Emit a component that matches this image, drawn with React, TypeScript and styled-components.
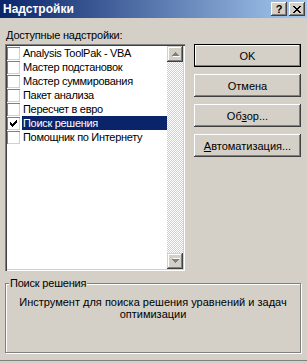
import React from 'react';
import styled, { createGlobalStyle } from 'styled-components';

const GlobalStyle = createGlobalStyle`
  html, body {
    margin: 0;
    padding: 0;
    background: #d4d0c8;
  }
  body {
    font-family: Tahoma, "Liberation Sans", Arial, sans-serif;
    font-size: 11px;
    color: #000;
  }
`;

const Window = styled.div`
  width: 307px;
  height: 363px;
  box-sizing: border-box;
  padding-bottom: 2px;
  background: #d4d0c8;
  display: flex;
  flex-direction: column;
  overflow: hidden;
`;

const TitleBar = styled.div`
  height: 18px;
  flex-shrink: 0;
  display: flex;
  align-items: center;
  padding: 0 2px 0 3px;
  background: linear-gradient(to right, #0a246a, #a6caf0);
`;

const Title = styled.span`
  flex: 1;
  color: #fff;
  font-weight: bold;
  font-size: 12px;
  line-height: 18px;
`;

const CaptionButtons = styled.div`
  display: flex;
  gap: 2px;
`;

const CaptionButton = styled.div`
  width: 16px;
  height: 14px;
  box-sizing: border-box;
  background: #d4d0c8;
  box-shadow: inset -1px -1px #404040, inset 1px 1px #fff, inset -2px -2px #808080, inset 2px 2px #d4d0c8;
  display: flex;
  align-items: center;
  justify-content: center;
  font-weight: bold;
  font-size: 11px;
  line-height: 14px;
`;

const Body = styled.div`
  flex: 1;
  padding: 11px 6px 0 5px;
  border-bottom: 1px solid #808080;
`;

const Main = styled.div`
  display: grid;
  grid-template-columns: 180px 107px;
  grid-template-rows: 13px 227px;
  column-gap: 9px;
  row-gap: 2px;
`;

const FieldLabel = styled.div`
  grid-column: 1;
  line-height: 13px;
  padding-left: 1px;
  letter-spacing: -0.2px;
`;

const ListBox = styled.div`
  grid-column: 1;
  grid-row: 2;
  box-sizing: border-box;
  padding: 2px;
  background: #fff;
  box-shadow: inset 1px 1px #808080, inset 2px 2px #404040, inset -1px -1px #fff, inset -2px -2px #d4d0c8;
  display: flex;
`;

const Items = styled.div`
  flex: 1;
  display: flex;
  flex-direction: column;
`;

const Row = styled.div`
  height: 14px;
  display: flex;
  align-items: center;
`;

const Check = styled.div`
  width: 13px;
  height: 13px;
  box-sizing: border-box;
  background: #fff;
  box-shadow: inset 1px 1px #808080, inset -1px -1px #d4d0c8;
  display: flex;
  align-items: center;
  justify-content: center;
  flex-shrink: 0;
`;

const ItemText = styled.span<{ $selected: boolean }>`
  flex: 1;
  height: 14px;
  line-height: 14px;
  margin-left: 2px;
  padding-left: 1px;
  letter-spacing: -0.3px;
  white-space: nowrap;
  background: ${({ $selected }) => ($selected ? '#0a246a' : 'transparent')};
  color: ${({ $selected }) => ($selected ? '#fff' : '#000')};
`;

const ScrollBar = styled.div`
  width: 16px;
  display: flex;
  flex-direction: column;
`;

const ScrollButton = styled.div`
  width: 16px;
  height: 16px;
  flex-shrink: 0;
  background: #d4d0c8;
  box-shadow: inset -1px -1px #404040, inset 1px 1px #d4d0c8, inset -2px -2px #808080, inset 2px 2px #fff;
  display: flex;
  align-items: center;
  justify-content: center;
`;

const Track = styled.div`
  flex: 1;
  background-image: conic-gradient(#fff 25%, #d4d0c8 0 50%, #fff 0 75%, #d4d0c8 0);
  background-size: 2px 2px;
`;

const Buttons = styled.div`
  grid-column: 2;
  grid-row: 2;
  display: flex;
  flex-direction: column;
  gap: 7px;
`;

const Button = styled.div<{ $default?: boolean }>`
  height: 23px;
  box-sizing: border-box;
  display: flex;
  align-items: center;
  justify-content: center;
  background: #d4d0c8;
  box-shadow: ${({ $default }) =>
    $default
      ? 'inset 0 0 0 1px #000, inset -2px -2px #808080, inset 2px 2px #fff'
      : 'inset -1px -1px #404040, inset 1px 1px #fff, inset -2px -2px #808080, inset 2px 2px #d4d0c8'};
`;

const GroupBox = styled.div`
  position: relative;
  margin-top: 12px;
  width: 296px;
  height: 70px;
  box-sizing: border-box;
  border: 1px solid #808080;
  box-shadow: inset 1px 1px #fff, 1px 1px #fff;
  padding: 12px 6px 0;
  text-align: center;
  line-height: 12px;
`;

const GroupTitle = styled.span`
  position: absolute;
  top: -7px;
  left: 3px;
  padding: 0 1px;
  line-height: 13px;
  background: #d4d0c8;
  letter-spacing: -0.2px;
`;

const Arrow = ({ down }: { down?: boolean }) => (
  <svg width="9" height="6" viewBox="0 0 9 6" shapeRendering="crispEdges">
    <g transform={down ? 'translate(0 6) scale(1 -1)' : undefined}>
      <path d="M2 5h7v1H2zM3 4h5v1H3zM4 3h3v1H4zM5 2h1v1H5z" fill="#fff" />
      <path d="M1 4h7v1H1zM2 3h5v1H2zM3 2h3v1H3zM4 1h1v1H4z" fill="#808080" />
    </g>
  </svg>
);

const CheckMark = () => (
  <svg width="7" height="7" viewBox="0 0 7 7" shapeRendering="crispEdges">
    <path d="M6 0h1v3H6zM5 1h1v3H5zM4 2h1v3H4zM3 3h1v3H3zM2 4h1v3H2zM1 3h1v3H1zM0 2h1v3H0z" fill="#000" />
  </svg>
);

const CloseGlyph = () => (
  <svg width="8" height="7" viewBox="0 0 8 7" shapeRendering="crispEdges">
    <path d="M0 0h2v1H0zM6 0h2v1H6zM1 1h2v1H1zM5 1h2v1H5zM2 2h4v1H2zM3 3h2v1H3zM2 4h4v1H2zM1 5h2v1H1zM5 5h2v1H5zM0 6h2v1H0zM6 6h2v1H6z" fill="#000" />
  </svg>
);

const addIns = [
  { name: 'Analysis ToolPak - VBA', checked: false },
  { name: 'Мастер подстановок', checked: false },
  { name: 'Мастер суммирования', checked: false },
  { name: 'Пакет анализа', checked: false },
  { name: 'Пересчет в евро', checked: false },
  { name: 'Поиск решения', checked: true },
  { name: 'Помощник по Интернету', checked: false },
];

const App: React.FC = () => {
  const selected = 'Поиск решения';

  return (
    <>
      <GlobalStyle />
      <Window>
        <TitleBar>
          <Title>Надстройки</Title>
          <CaptionButtons>
            <CaptionButton>?</CaptionButton>
            <CaptionButton>
              <CloseGlyph />
            </CaptionButton>
          </CaptionButtons>
        </TitleBar>
        <Body>
          <Main>
            <FieldLabel>
              <u>Д</u>оступные надстройки:
            </FieldLabel>
            <ListBox>
              <Items>
                {addIns.map((item) => (
                  <Row key={item.name}>
                    <Check>{item.checked && <CheckMark />}</Check>
                    <ItemText $selected={item.name === selected}>{item.name}</ItemText>
                  </Row>
                ))}
              </Items>
              <ScrollBar>
                <ScrollButton>
                  <Arrow />
                </ScrollButton>
                <Track />
                <ScrollButton>
                  <Arrow down />
                </ScrollButton>
              </ScrollBar>
            </ListBox>
            <Buttons>
              <Button $default>OK</Button>
              <Button>Отмена</Button>
              <Button>
                Об<u>з</u>ор...
              </Button>
              <Button>
                <u>А</u>втоматизация...
              </Button>
            </Buttons>
          </Main>
          <GroupBox>
            <GroupTitle>Поиск решения</GroupTitle>
            Инструмент для поиска решения уравнений и задач оптимизации
          </GroupBox>
        </Body>
      </Window>
    </>
  );
};

export default App;
